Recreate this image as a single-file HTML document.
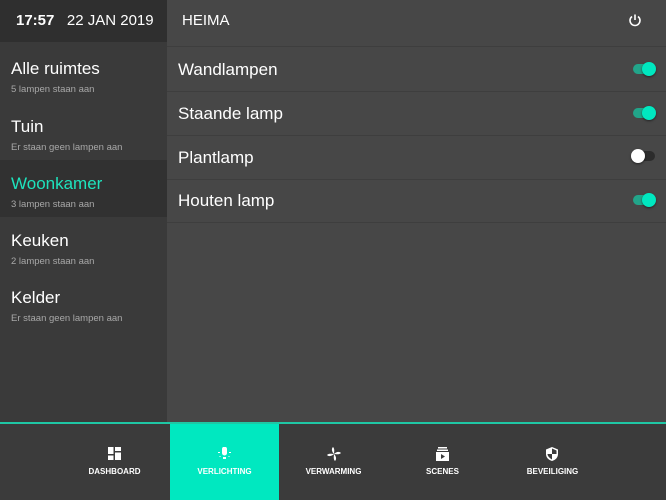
<!DOCTYPE html>
<html><head><style>
*{margin:0;padding:0;box-sizing:border-box}
body{width:666px;height:500px;overflow:hidden;background:#474747;font-family:"Liberation Sans",sans-serif;color:#fff;position:relative}
.lh{position:absolute;left:0;top:0;width:167px;height:42px;background:#2f2f2f;font-size:15px;line-height:42px;padding-left:16px}
.side{position:absolute;left:0;top:42px;width:167px;height:380px;background:#3a3a3a}
.it{height:57px;padding:14px 0 0 11px}
.it.sel{background:#313131}
.it .t{font-size:17px;line-height:20px}
.it .s{font-size:9.5px;color:#a8a8a8;margin-top:5px}
.hd{position:absolute;left:167px;top:0;width:499px;height:47px;border-bottom:1px solid #3e3e3e;font-size:15px;line-height:42px;padding-left:15px}
.row{position:absolute;left:167px;width:499px;height:44px;border-bottom:1px solid #3e3e3e;font-size:17px;line-height:44px;padding-left:11px}
.tg{position:absolute;left:633px;width:22px;height:10px;border-radius:5px}
.tg.on{background:#22a58a}.tg.off{background:#2c2c2c}
.k{position:absolute;top:-2px;width:14px;height:14px;border-radius:7px;box-shadow:0 1px 2px rgba(0,0,0,.5)}
.on .k{left:9px;background:#00e8c0}.off .k{left:-2px;background:#fff}
.bar{position:absolute;left:0;top:422px;width:666px;height:78px;background:#3b3b3b;border-top:2px solid #1fc7a5}
.tab{position:absolute;top:0;width:109px;height:76px;text-align:center;font-size:8px;font-weight:bold}
.tab svg{position:absolute;left:48px;top:23px}
.tab span{position:absolute;left:0;right:0;top:43px}
.act{background:#00e8c0}
</style></head><body>
<div class="lh"><b>17:57</b>&nbsp;&nbsp;&nbsp;22 JAN 2019</div>
<div class="side">
<div class="it" style="height:61px;padding-top:17px"><div class="t">Alle ruimtes</div><div class="s">5 lampen staan aan</div></div>
<div class="it"><div class="t">Tuin</div><div class="s">Er staan geen lampen aan</div></div>
<div class="it sel"><div class="t" style="color:#1ee3bd">Woonkamer</div><div class="s">3 lampen staan aan</div></div>
<div class="it"><div class="t">Keuken</div><div class="s">2 lampen staan aan</div></div>
<div class="it"><div class="t">Kelder</div><div class="s">Er staan geen lampen aan</div></div>
</div>
<div class="hd">HEIMA</div>
<svg style="position:absolute;left:628px;top:13px" width="14" height="14" viewBox="0 0 14 14"><path d="M4 3.5A5 5 0 1 0 10 3.5" fill="none" stroke="#fff" stroke-width="1.6"/><path d="M7 1.5V7" stroke="#fff" stroke-width="1.6"/></svg>
<div class="row" style="top:48px">Wandlampen</div>
<div class="row" style="top:92px">Staande lamp</div>
<div class="row" style="top:136px">Plantlamp</div>
<div class="row" style="top:179px">Houten lamp</div>
<div class="tg on" style="top:64px"><div class="k"></div></div>
<div class="tg on" style="top:108px"><div class="k"></div></div>
<div class="tg off" style="top:151px"><div class="k"></div></div>
<div class="tg on" style="top:195px"><div class="k"></div></div>
<div class="bar">
<div class="tab" style="left:60px"><svg width="13" height="13" viewBox="0 0 13 13" fill="#fff"><rect x="0" y="0" width="5.5" height="7"/><rect x="7" y="0" width="6" height="4"/><rect x="0" y="8.5" width="5.5" height="4.5"/><rect x="7" y="5.5" width="6" height="7.5"/></svg><span>DASHBOARD</span></div>
<div class="tab act" style="left:170px"><svg width="13" height="13" viewBox="0 0 13 13" fill="#fff"><path d="M4 2a2.5 2.5 0 0 1 5 0v4a2.5 2.5 0 0 1-5 0z"/><rect x="5" y="10" width="3" height="2"/><rect x="0" y="5" width="2" height="1"/><rect x="11" y="5" width="2" height="1"/><rect x="1.5" y="9" width="1" height="1"/><rect x="10.5" y="9" width="1" height="1"/></svg><span>VERLICHTING</span></div>
<div class="tab" style="left:279px"><svg width="14" height="14" viewBox="0 0 14 14" fill="#fff"><path d="M7 7C5 5 4 2 6 0c2 2 1 5 1 7zM7 7c2-2 5-3 7-1-2 2-5 1-7 1zM7 7c2 2 3 5 1 7-2-2-1-5-1-7zM7 7c-2 2-5 3-7 1 2-2 5-1 7-1z"/></svg><span>VERWARMING</span></div>
<div class="tab" style="left:388px"><svg width="13" height="14" viewBox="0 0 13 14" fill="#fff"><rect x="2" y="0" width="9" height="1.5"/><rect x="1" y="2.5" width="11" height="1.5"/><path d="M0 5h13v9H0zM5 7v5l4-2.5z" fill-rule="evenodd"/></svg><span>SCENES</span></div>
<div class="tab" style="left:498px"><svg width="12" height="14" viewBox="0 0 12 14"><path d="M6 0L0 2.5V7c0 3.5 2.5 6 6 7 3.5-1 6-3.5 6-7V2.5z" fill="#fff"/><path d="M6 1.5V7H1.5C1.5 8 2 10 6 12.5V7h4.5V3.5z" fill="#3b3b3b"/></svg><span>BEVEILIGING</span></div>
</div>
</body></html>
